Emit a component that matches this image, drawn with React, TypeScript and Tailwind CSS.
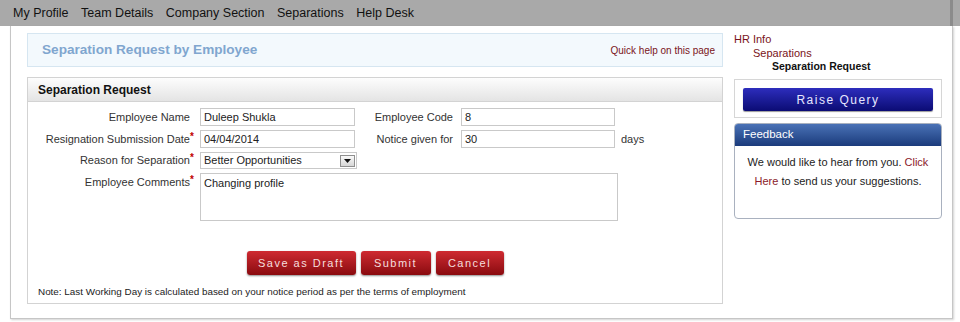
import React from 'react';

const navItems = ['My Profile', 'Team Details', 'Company Section', 'Separations', 'Help Desk'];

function Req() {
  return <span className="inline-block w-[6px] text-left align-top text-[10px] font-bold leading-[12px] text-[#c00000]">*</span>;
}

function Gap() {
  return <span className="inline-block w-[6px]" />;
}

function Field({ value, w }: { value: string; w: string }) {
  return (
    <div className={`${w} flex h-[18px] items-center border border-[#c9c9c9] bg-white pl-[3px] text-[11px] text-[#222]`}>
      {value}
    </div>
  );
}

function RedButton({ label, w }: { label: string; w: string }) {
  return (
    <button
      className={`${w} h-[24px] rounded-[3px] bg-gradient-to-b from-[#cf2a31] to-[#8a0a0f] text-[11px] tracking-[1.5px] text-[#f5dede] shadow-[0_1px_2px_rgba(0,0,0,0.45)]`}
    >
      {label}
    </button>
  );
}

export default function App() {
  return (
    <div className="h-[322px] w-[960px] overflow-hidden bg-white font-['Liberation_Sans',Arial,sans-serif]">
      {/* top menu */}
      <div className="flex h-[26px] bg-[#a9a9a9]">
        <nav className="flex flex-1 items-center gap-[12.5px] pl-[13px] text-[12.5px] text-[#111]">
          {navItems.map(n => (
            <span key={n}>{n}</span>
          ))}
        </nav>
        <div className="w-[3px] bg-[#8b8b8b]" />
        <div className="w-[7px]" />
      </div>

      <div className="ml-[10px] flex w-[943px] gap-[11px] border border-t-0 border-[#c6c6c6] pb-[14px] pl-[16px] pr-[10px] pt-[7px] shadow-[1px_1px_2px_rgba(0,0,0,0.18)]">
        {/* main column */}
        <div className="flex w-[696px] flex-col gap-[10px]">
          <div className="flex h-[34px] items-center justify-between border border-[#d6e6f1] bg-[#f3f9fd] pl-[14px] pr-[7px]">
            <h1 className="text-[13.6px] font-bold text-[#80a6cf]">Separation Request by Employee</h1>
            <a className="text-[10px] text-[#7a1420]">Quick help on this page</a>
          </div>

          <div className="border border-[#d3d3d3]">
            <div className="flex h-[24px] items-center border-b border-[#d3d3d3] bg-gradient-to-b from-[#fdfdfd] to-[#e4e4e4] pl-[10px] text-[12px] font-bold text-[#111]">
              Separation Request
            </div>

            <div className="flex flex-col gap-[4px] pt-[6px] text-[11px] text-[#333]">
              <div className="flex items-center">
                <label className="w-[168px] text-right">Employee Name<Gap /></label>
                <div className="ml-[4px]"><Field value="Duleep Shukla" w="w-[155px]" /></div>
                <label className="w-[98px] text-right">Employee Code</label>
                <div className="ml-[8px]"><Field value="8" w="w-[154px]" /></div>
              </div>
              <div className="flex items-center">
                <label className="w-[168px] text-right">Resignation Submission Date<Req /></label>
                <div className="ml-[4px]"><Field value="04/04/2014" w="w-[155px]" /></div>
                <label className="w-[98px] text-right">Notice given for</label>
                <div className="ml-[8px]"><Field value="30" w="w-[154px]" /></div>
                <span className="ml-[6px]">days</span>
              </div>
              <div className="flex items-center">
                <label className="w-[168px] text-right">Reason for Separation<Req /></label>
                <div className="ml-[4px] flex h-[17px] w-[157px] items-center justify-between border border-[#c9c9c9] bg-white pl-[3px] pr-[1px] text-[11px] text-[#222]">
                  <span>Better Opportunities</span>
                  <span className="flex h-[12px] w-[15px] items-center justify-center border border-[#8f8f8f] bg-gradient-to-b from-[#fafafa] to-[#d6d6d6]">
                    <svg width="7" height="4" viewBox="0 0 7 4">
                      <polygon points="0,0 7,0 3.5,4" fill="#111" />
                    </svg>
                  </span>
                </div>
              </div>
              <div className="flex items-start">
                <label className="w-[168px] pt-[1px] text-right">Employee Comments<Req /></label>
                <div className="ml-[4px] h-[48px] w-[418px] border border-[#c9c9c9] bg-white pl-[3px] pt-[1px] text-[11px] text-[#222]">
                  Changing profile
                </div>
              </div>
            </div>

            <div className="mt-[30px] flex justify-center gap-[5px]">
              <RedButton label="Save as Draft" w="w-[109px]" />
              <RedButton label="Submit" w="w-[70px]" />
              <RedButton label="Cancel" w="w-[68px]" />
            </div>

            <p className="pb-[5px] pl-[10px] pt-[11px] text-[9.9px] leading-[12px] text-[#222]">
              Note: Last Working Day is calculated based on your notice period as per the terms of employment
            </p>
          </div>
        </div>

        {/* side column */}
        <aside className="flex w-[208px] flex-col">
          <div className="text-[11px] leading-[13.5px]">
            <div className="text-[#7a1420]">HR Info</div>
            <div className="pl-[19px] text-[#7a1420]">Separations</div>
            <div className="pl-[38px] text-[10.5px] font-bold text-[#111]">Separation Request</div>
          </div>

          <div className="mt-[5px] border border-[#d6d6d6] px-[8px] pb-[6px] pt-[7px]">
            <button className="h-[23px] w-full rounded-[2px] bg-gradient-to-b from-[#2d2dbd] to-[#0b0b74] text-[12px] tracking-[1.5px] text-[#e6e6ff] shadow-[0_1px_1px_rgba(0,0,0,0.4)]">
              Raise Query
            </button>
          </div>

          <div className="mt-[5px] h-[96px] overflow-hidden rounded-[4px] border border-[#a9b1bf]">
            <div className="flex h-[22px] items-center bg-gradient-to-b from-[#4a72b6] to-[#1b3b7c] pl-[8px] text-[11.5px] text-white">
              Feedback
            </div>
            <p className="px-[10px] pt-[7px] text-center text-[11px] leading-[19px] text-[#222]">
              We would like to hear from you. <a className="text-[#8b1a2a]">Click</a>{' '}
              <a className="text-[#8b1a2a]">Here</a> to send us your suggestions.
            </p>
          </div>
        </aside>
      </div>
    </div>
  );
}
